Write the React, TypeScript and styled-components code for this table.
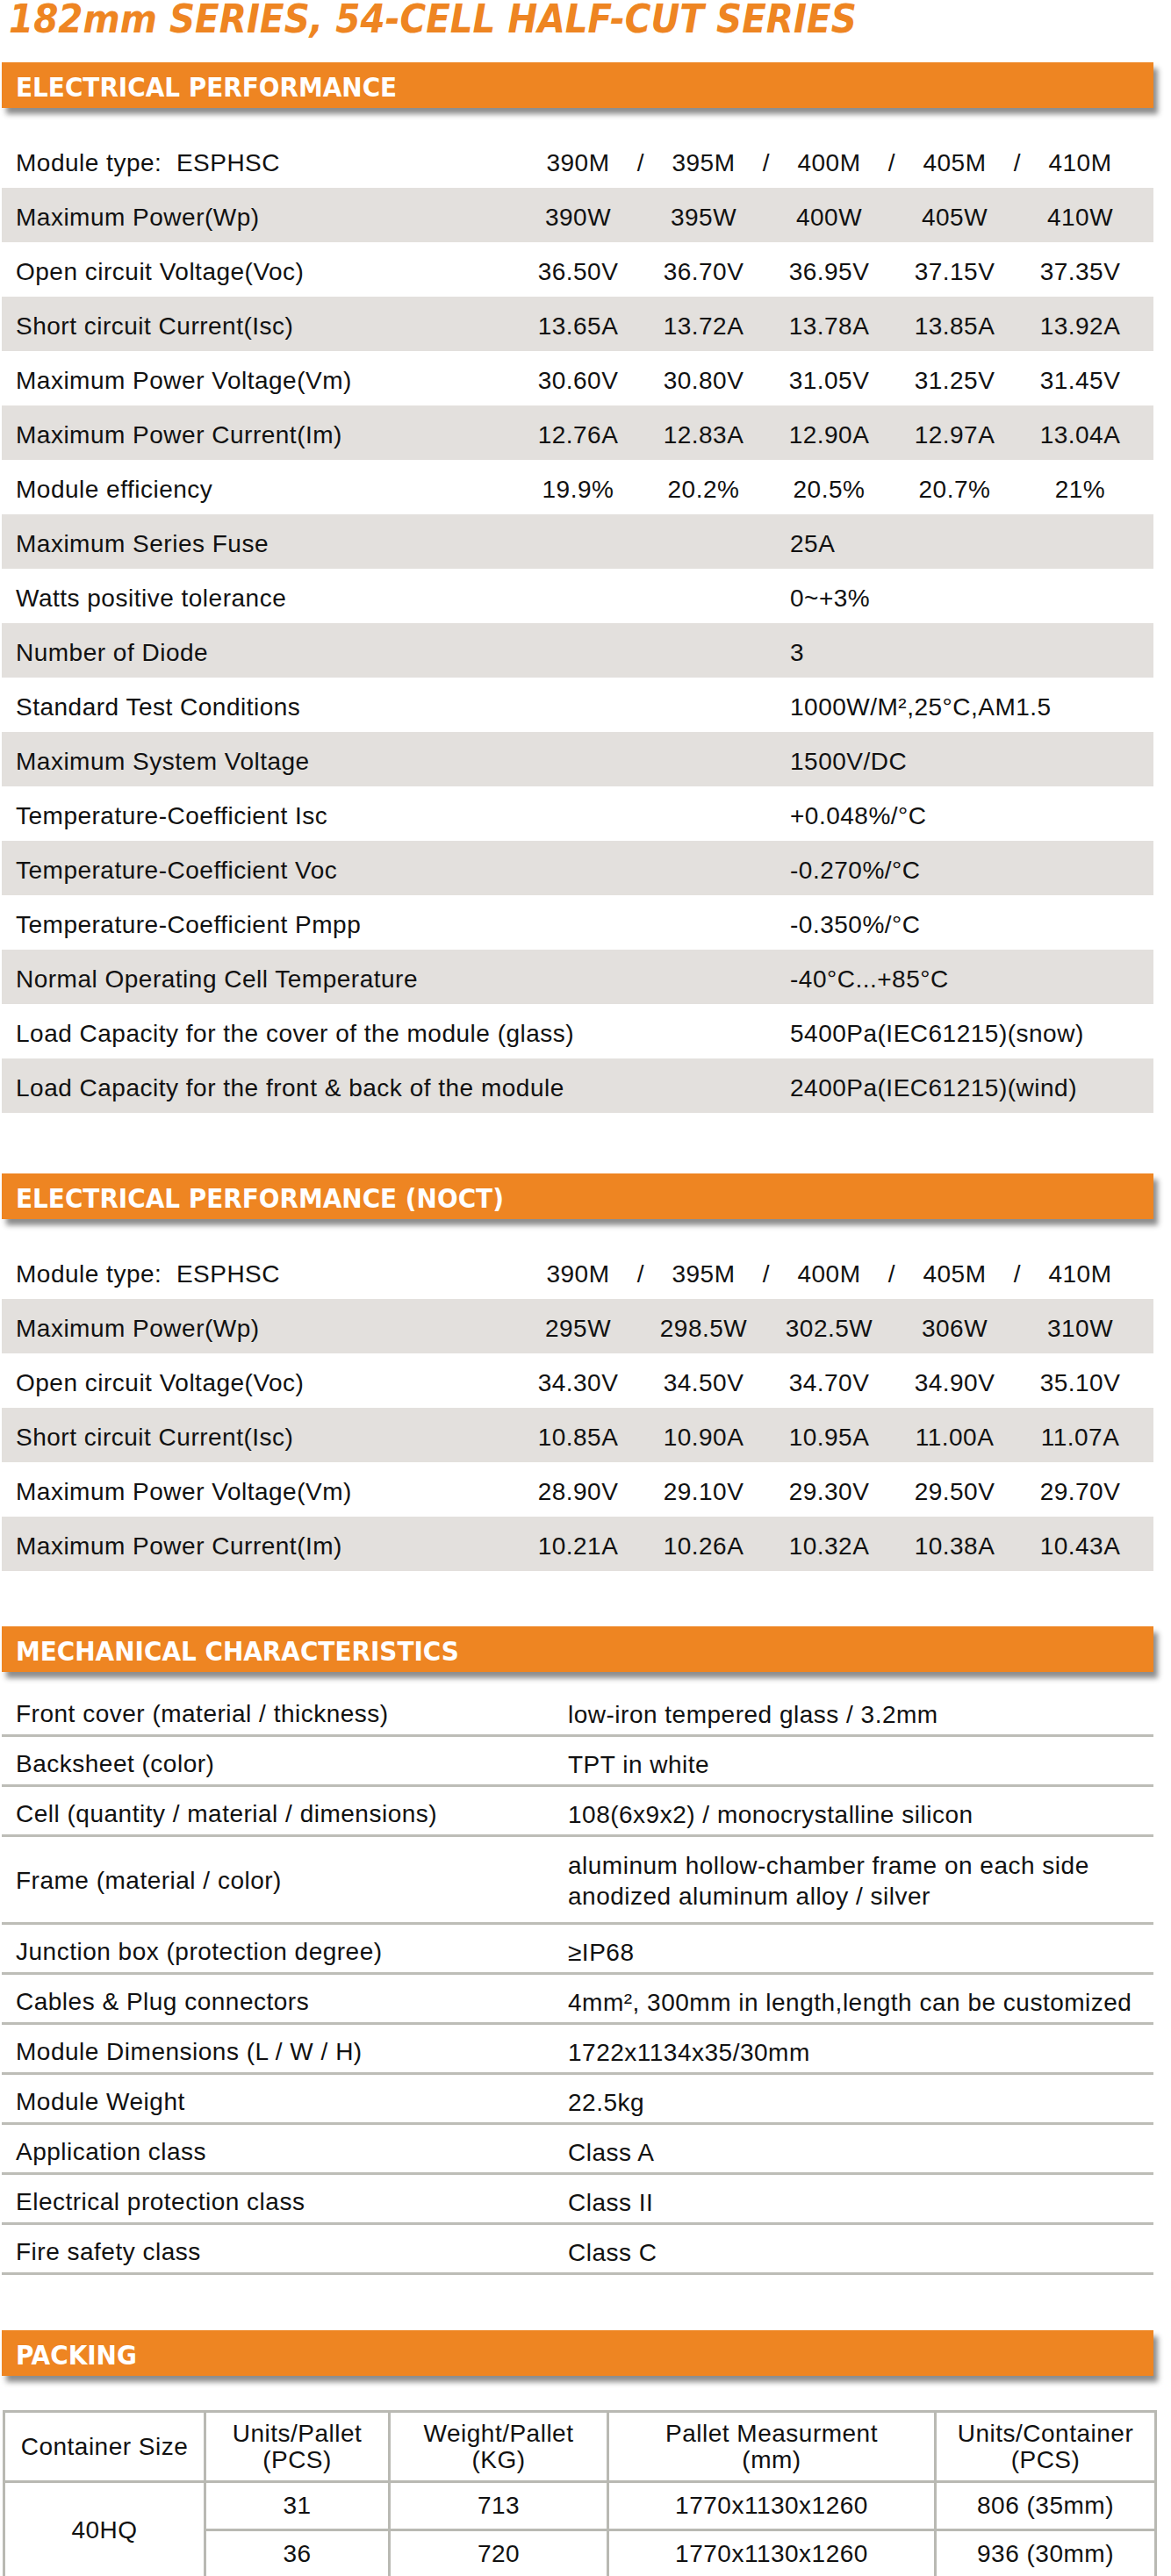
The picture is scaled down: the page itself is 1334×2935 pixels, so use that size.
import React from "react";
import styled, { createGlobalStyle } from "styled-components";

const GlobalStyle = createGlobalStyle`
  html, body { margin: 0; padding: 0; background: #ffffff; }
  body {
    font-family: "Liberation Sans", Arial, sans-serif;
    color: #111111;
  }
`;

const ORANGE = "#ee8522";
const SHADE = "#e3e0dd";
const RULE = "#bdbdb7";

const Page = styled.div`
  width: 1312px;
  padding: 0 20px 0 2px;
  display: flex;
  flex-direction: column;
`;

const Title = styled.h1`
  margin: 0;
  padding-left: 8px;
  font-family: "DejaVu Sans Condensed", "DejaVu Sans", sans-serif;
  font-stretch: condensed;
  font-weight: 700;
  font-style: italic;
  font-size: 45px;
  line-height: 44px;
  color: ${ORANGE};
  white-space: nowrap;
`;

const Section = styled.section<{ $gap: number }>`
  margin-top: ${(p) => p.$gap}px;
  display: flex;
  flex-direction: column;
`;

const Bar = styled.h2`
  margin: 0;
  height: 52px;
  box-sizing: border-box;
  padding: 5px 0 0 16px;
  background: ${ORANGE};
  box-shadow: 5px 7px 6px rgba(0, 0, 0, 0.45);
  color: #ffffff;
  font-family: "DejaVu Sans Condensed", "DejaVu Sans", sans-serif;
  font-stretch: condensed;
  font-weight: 700;
  font-size: 31px;
  line-height: 47px;
  white-space: nowrap;
`;

const SpecTable = styled.div`
  margin-top: 29px;
  display: flex;
  flex-direction: column;
`;

const SpecRow = styled.div<{ $shade: boolean }>`
  display: grid;
  grid-template-columns: 585px repeat(5, 143px) 1fr;
  align-items: center;
  height: 62px;
  box-sizing: border-box;
  padding-top: 6px;
  background: ${(p) => (p.$shade ? SHADE : "transparent")};
  font-size: 28px;
  letter-spacing: 0.5px;
`;

const Label = styled.div`
  padding-left: 16px;
  white-space: pre;
`;

const Value = styled.div`
  text-align: center;
  white-space: nowrap;
`;

const SpanValue = styled.div`
  grid-column: 4 / -1;
  padding-left: 27px;
  white-space: nowrap;
`;

const ModelValues = styled.div`
  grid-column: 2 / 7;
  display: grid;
  grid-template-columns: 143px 0 143px 0 143px 0 143px 0 143px;
  align-items: center;
`;

const Slash = styled.span`
  width: 0;
  display: flex;
  justify-content: center;
`;

const MechTable = styled.div`
  margin-top: 17px;
  display: flex;
  flex-direction: column;
`;

const MechRow = styled.div<{ $tall?: boolean }>`
  display: grid;
  grid-template-columns: 645px 1fr;
  align-items: center;
  height: ${(p) => (p.$tall ? 100 : 57)}px;
  box-sizing: border-box;
  padding-top: ${(p) => (p.$tall ? 3 : 8)}px;
  border-bottom: 3px solid ${RULE};
  font-size: 28px;
  letter-spacing: 0.5px;
`;

const MechValue = styled.div`
  line-height: 35px;
  white-space: nowrap;
`;

const PackTable = styled.table`
  margin-top: 39px;
  margin-left: 1px;
  width: 1313px;
  border-collapse: collapse;
  table-layout: fixed;
  font-size: 28px;
  letter-spacing: 0.5px;
  color: #111111;
`;

const PackHead = styled.th`
  border: 3px solid #b9b9b3;
  padding: 0;
  font-weight: 400;
  text-align: center;
  vertical-align: middle;
  line-height: 30px;
`;

const PackCell = styled.td`
  border: 3px solid #b9b9b3;
  padding: 0;
  text-align: center;
  vertical-align: middle;
  line-height: 30px;
`;

const HeadRow = styled.tr`
  height: 80px;
`;

const BodyRow = styled.tr`
  height: 55px;
`;

const MODELS = ["390M", "395M", "400M", "405M", "410M"];

type Spec = { label: string; values?: string[]; value?: string };

const ELECTRICAL: Spec[] = [
  { label: "Maximum Power(Wp)", values: ["390W", "395W", "400W", "405W", "410W"] },
  { label: "Open circuit Voltage(Voc)", values: ["36.50V", "36.70V", "36.95V", "37.15V", "37.35V"] },
  { label: "Short circuit Current(Isc)", values: ["13.65A", "13.72A", "13.78A", "13.85A", "13.92A"] },
  { label: "Maximum Power Voltage(Vm)", values: ["30.60V", "30.80V", "31.05V", "31.25V", "31.45V"] },
  { label: "Maximum Power Current(Im)", values: ["12.76A", "12.83A", "12.90A", "12.97A", "13.04A"] },
  { label: "Module efficiency", values: ["19.9%", "20.2%", "20.5%", "20.7%", "21%"] },
  { label: "Maximum Series Fuse", value: "25A" },
  { label: "Watts positive tolerance", value: "0~+3%" },
  { label: "Number of Diode", value: "3" },
  { label: "Standard Test Conditions", value: "1000W/M²,25°C,AM1.5" },
  { label: "Maximum System Voltage", value: "1500V/DC" },
  { label: "Temperature-Coefficient Isc", value: "+0.048%/°C" },
  { label: "Temperature-Coefficient Voc", value: "-0.270%/°C" },
  { label: "Temperature-Coefficient Pmpp", value: "-0.350%/°C" },
  { label: "Normal Operating Cell Temperature", value: "-40°C...+85°C" },
  { label: "Load Capacity for the cover of the module (glass)", value: "5400Pa(IEC61215)(snow)" },
  { label: "Load Capacity for the front & back of the module", value: "2400Pa(IEC61215)(wind)" },
];

const NOCT: Spec[] = [
  { label: "Maximum Power(Wp)", values: ["295W", "298.5W", "302.5W", "306W", "310W"] },
  { label: "Open circuit Voltage(Voc)", values: ["34.30V", "34.50V", "34.70V", "34.90V", "35.10V"] },
  { label: "Short circuit Current(Isc)", values: ["10.85A", "10.90A", "10.95A", "11.00A", "11.07A"] },
  { label: "Maximum Power Voltage(Vm)", values: ["28.90V", "29.10V", "29.30V", "29.50V", "29.70V"] },
  { label: "Maximum Power Current(Im)", values: ["10.21A", "10.26A", "10.32A", "10.38A", "10.43A"] },
];

const MECHANICAL: { label: string; value: string[] }[] = [
  { label: "Front cover (material / thickness)", value: ["low-iron tempered glass / 3.2mm"] },
  { label: "Backsheet (color)", value: ["TPT in white"] },
  { label: "Cell (quantity / material / dimensions)", value: ["108(6x9x2) / monocrystalline silicon"] },
  {
    label: "Frame (material / color)",
    value: ["aluminum hollow-chamber frame on each side", "anodized aluminum alloy / silver"],
  },
  { label: "Junction box (protection degree)", value: ["≥IP68"] },
  { label: "Cables & Plug connectors", value: ["4mm², 300mm in length,length can be customized"] },
  { label: "Module Dimensions (L / W / H)", value: ["1722x1134x35/30mm"] },
  { label: "Module Weight", value: ["22.5kg"] },
  { label: "Application class", value: ["Class A"] },
  { label: "Electrical protection class", value: ["Class II"] },
  { label: "Fire safety class", value: ["Class C"] },
];

const PACKING = [
  ["31", "713", "1770x1130x1260", "806 (35mm)"],
  ["36", "720", "1770x1130x1260", "936 (30mm)"],
];

function ElectricalTable({ rows }: { rows: Spec[] }) {
  return (
    <SpecTable>
      <SpecRow $shade={false}>
        <Label>{"Module type:  ESPHSC"}</Label>
        <ModelValues>
          {MODELS.map((m, i) => (
            <React.Fragment key={m}>
              <Value>{m}</Value>
              {i < MODELS.length - 1 && <Slash>/</Slash>}
            </React.Fragment>
          ))}
        </ModelValues>
      </SpecRow>
      {rows.map((r, i) => (
        <SpecRow key={r.label} $shade={i % 2 === 0}>
          <Label>{r.label}</Label>
          {r.values ? r.values.map((v, j) => <Value key={j}>{v}</Value>) : <SpanValue>{r.value}</SpanValue>}
        </SpecRow>
      ))}
    </SpecTable>
  );
}

export default function App() {
  return (
    <>
      <GlobalStyle />
      <Page>
        <Title>182mm SERIES, 54-CELL HALF-CUT SERIES</Title>

        <Section $gap={27}>
          <Bar>ELECTRICAL PERFORMANCE</Bar>
          <ElectricalTable rows={ELECTRICAL} />
        </Section>

        <Section $gap={69}>
          <Bar>ELECTRICAL PERFORMANCE (NOCT)</Bar>
          <ElectricalTable rows={NOCT} />
        </Section>

        <Section $gap={63}>
          <Bar>MECHANICAL CHARACTERISTICS</Bar>
          <MechTable>
            {MECHANICAL.map((r) => (
              <MechRow key={r.label} $tall={r.value.length > 1}>
                <Label>{r.label}</Label>
                <MechValue>
                  {r.value.map((line) => (
                    <div key={line}>{line}</div>
                  ))}
                </MechValue>
              </MechRow>
            ))}
          </MechTable>
        </Section>

        <Section $gap={63}>
          <Bar>PACKING</Bar>
          <PackTable>
            <colgroup>
              <col style={{ width: 229 }} />
              <col style={{ width: 210 }} />
              <col style={{ width: 249 }} />
              <col style={{ width: 373 }} />
              <col style={{ width: 251 }} />
            </colgroup>
            <thead>
              <HeadRow>
                <PackHead>Container Size</PackHead>
                <PackHead>
                  Units/Pallet
                  <br />
                  (PCS)
                </PackHead>
                <PackHead>
                  Weight/Pallet
                  <br />
                  (KG)
                </PackHead>
                <PackHead>
                  Pallet Measurment
                  <br />
                  (mm)
                </PackHead>
                <PackHead>
                  Units/Container
                  <br />
                  (PCS)
                </PackHead>
              </HeadRow>
            </thead>
            <tbody>
              {PACKING.map((row, i) => (
                <BodyRow key={i}>
                  {i === 0 && <PackCell rowSpan={2}>40HQ</PackCell>}
                  {row.map((c, j) => (
                    <PackCell key={j}>{c}</PackCell>
                  ))}
                </BodyRow>
              ))}
            </tbody>
          </PackTable>
        </Section>
      </Page>
    </>
  );
}
